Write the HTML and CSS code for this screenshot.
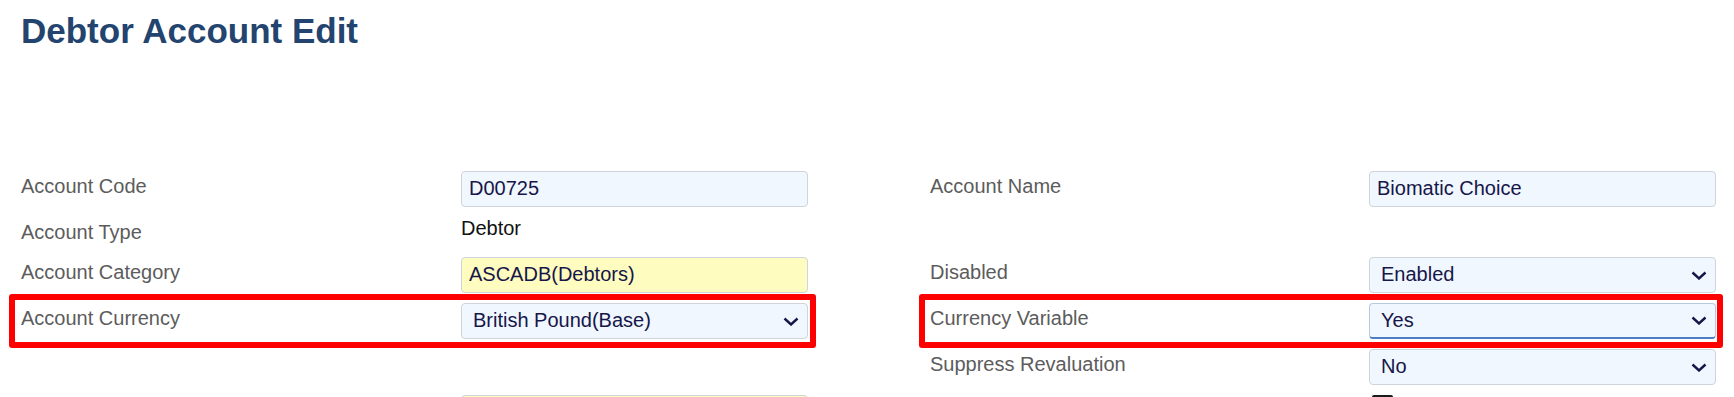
FILE: index.html
```html
<!DOCTYPE html>
<html lang="en">
<head>
  <meta charset="UTF-8" />
  <title>Debtor Account Edit</title>
  <link rel="stylesheet" href="styles.css">
</head>
<body>

<div class="page">
  <h1>Debtor Account Edit</h1>

  <form class="form-grid">
    <!-- row 1 -->
    <div class="pair">
      <label for="code">Account Code</label>
      <input type="text" id="code" class="field" value="D00725" />
    </div>
    <div class="pair">
      <label for="name">Account Name</label>
      <input type="text" id="name" class="field" value="Biomatic Choice" />
    </div>

    <!-- row 2 -->
    <div class="pair">
      <label>Account Type</label>
      <div class="static">Debtor</div>
    </div>
    <div class="pair"></div>

    <!-- row 3 -->
    <div class="pair">
      <label for="category">Account Category</label>
      <input type="text" id="category" class="field required" value="ASCADB(Debtors)" />
    </div>
    <div class="pair">
      <label for="disabled">Disabled</label>
      <select id="disabled" class="field">
        <option>Enabled</option>
        <option>Disabled</option>
      </select>
    </div>

    <!-- row 4 -->
    <div class="pair marked">
      <label for="currency">Account Currency</label>
      <select id="currency" class="field">
        <option>British Pound(Base)</option>
      </select>
    </div>
    <div class="pair marked marked-right">
      <label for="variable">Currency Variable</label>
      <select id="variable" class="field focused">
        <option>Yes</option>
        <option>No</option>
      </select>
    </div>

    <!-- row 5 -->
    <div class="pair"></div>
    <div class="pair">
      <label for="revalue">Suppress Revaluation</label>
      <select id="revalue" class="field">
        <option>No</option>
        <option>Yes</option>
      </select>
    </div>

    <!-- row 6 -->
    <div class="pair">
      <label></label>
      <input type="text" class="field required" value="" />
    </div>
    <div class="pair">
      <label></label>
      <span class="check"></span>
    </div>
  </form>
</div>

</body>
</html>
```

FILE: styles.css
```css
body {
  margin: 0;
  font-family: 'Liberation Sans', Arial, sans-serif;
  background: #ffffff;
  overflow: hidden;
}

.page {
  padding: 11px 21px 0;
}

h1 {
  margin: 0;
  font-size: 35px;
  line-height: 40px;
  font-weight: bold;
  color: #23446e;
}

.form-grid {
  margin-top: 120px;
  display: grid;
  grid-template-columns: 787px 786px;
  column-gap: 122px;
  row-gap: 10px;
}

.pair {
  display: grid;
  grid-template-columns: 1fr 347px;
  align-items: start;
}

label {
  padding-top: 3px;
  font-size: 20px;
  line-height: 24px;
  color: #5c5c5c;
}

.static {
  font-size: 20px;
  line-height: 22px;
  min-height: 30px;
  color: #111111;
}

.field {
  box-sizing: border-box;
  width: 100%;
  height: 36px;
  margin: 0;
  padding: 0 7px 2px;
  border: 1px solid #cfd4da;
  border-radius: 4px;
  background: #f0f7fe;
  font-family: 'Liberation Sans', Arial, sans-serif;
  font-size: 20px;
  color: #16164a;
  outline: none;
}

.field.required {
  background: #fefcbf;
}

select.field {
  appearance: none;
  -webkit-appearance: none;
  padding-left: 11px;
  background-image: url("data:image/svg+xml,%3Csvg xmlns='http://www.w3.org/2000/svg' width='16' height='9' viewBox='0 0 16 9'%3E%3Cpolyline points='1.5,1.5 8,7.5 14.5,1.5' fill='none' stroke='%2316164a' stroke-width='2.4'/%3E%3C/svg%3E");
  background-repeat: no-repeat;
  background-position: right 8px center;
  background-size: 16px 9px;
}

.field.focused {
  border-color: #b7c9e2;
  border-bottom: 2px solid #4c7dc4;
}

.check {
  display: block;
  box-sizing: border-box;
  width: 21px;
  height: 21px;
  margin-left: 3px;
  border: 2px solid #1a1a1a;
  border-radius: 2px;
  background: #ffffff;
}

/* red highlight boxes drawn over the marked rows */
.marked {
  position: relative;
}

.marked::after {
  content: "";
  position: absolute;
  top: -9px;
  bottom: -9px;
  left: -12px;
  right: -8px;
  border: 6px solid #ff0000;
  border-radius: 3px;
  pointer-events: none;
}

.marked-right::after {
  left: -11px;
  right: -7px;
}
```
